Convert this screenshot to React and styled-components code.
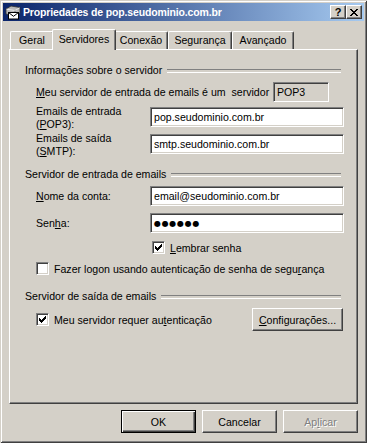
import React from 'react';
import styled, { createGlobalStyle, css } from 'styled-components';

const FACE = '#D4D0C8';
const FONT = '"Liberation Sans", Arial, sans-serif';
const FS = '10.6px';

const Global = createGlobalStyle`
  html, body { margin: 0; padding: 0; background: ${FACE}; }
  body { font-family: ${FONT}; font-size: ${FS}; color: #000; }
  * { box-sizing: border-box; }
`;

const Window = styled.div`
  width: 367px;
  height: 443px;
  background: ${FACE};
  padding: 3px;
  box-shadow: inset 1px 1px ${FACE}, inset -1px -1px #404040, inset 2px 2px #fff, inset -2px -2px #808080;
  display: flex;
  flex-direction: column;
`;

const TitleBar = styled.div`
  height: 18px;
  display: flex;
  align-items: center;
  gap: 2px;
  padding: 0 2px;
  background: linear-gradient(to right, #0a246a, #a6caf0);
  color: #fff;
  font-weight: bold;
  font-size: 10.5px;
  letter-spacing: -0.15px;
`;

const TitleText = styled.span`
  flex: 1;
  white-space: nowrap;
`;

const CaptionButtons = styled.div`
  display: flex;
  gap: 0;
`;

const CaptionButton = styled.div`
  width: 16px;
  height: 14px;
  background: ${FACE};
  border: 1px solid;
  border-color: #fff #404040 #404040 #fff;
  box-shadow: inset -1px -1px #808080;
  display: flex;
  align-items: center;
  justify-content: center;
  color: #000;
  font-weight: bold;
  font-size: 11px;
  letter-spacing: 0;
  line-height: 1;
  padding-top: 1px;
`;

const TabRow = styled.div`
  height: 20px;
  margin: 8px 0 0 6px;
  padding-left: 1px;
  display: flex;
  align-items: flex-end;
`;

const Tab = styled.div`
  width: ${(p) => p.$w}px;
  height: 18px;
  background: ${FACE};
  border-top: 1px solid #fff;
  border-left: 1px solid #fff;
  border-right: 1px solid #404040;
  box-shadow: inset -1px 0 #808080;
  border-radius: 2px 2px 0 0;
  display: flex;
  align-items: center;
  justify-content: center;
  position: relative;
  z-index: 1;
  white-space: nowrap;
  padding-bottom: 1px;
  ${(p) =>
    p.$active &&
    css`
      height: 21px;
      margin: 0 -2px -1px;
      z-index: 2;
      padding-bottom: 3px;
    `}
`;

const Panel = styled.div`
  width: 349px;
  height: 355px;
  margin-left: 6px;
  background: ${FACE};
  border: 1px solid;
  border-color: #fff #404040 #404040 #fff;
  box-shadow: inset -1px -1px #808080;
  padding: 14px 14px 0 15px;
  display: flex;
  flex-direction: column;
`;

const GroupHeading = styled.div`
  height: 13px;
  line-height: 13px;
  margin-top: ${(p) => p.$mt || 0}px;
  margin-right: 2px;
  display: flex;
  align-items: center;
  gap: 5px;
  white-space: nowrap;
  &::after {
    content: '';
    flex: 1;
    height: 2px;
    border-top: 1px solid #808080;
    border-bottom: 1px solid #fff;
  }
`;

const Row = styled.div`
  margin-top: ${(p) => p.$mt || 0}px;
  padding-left: ${(p) => (p.$indent ?? 11)}px;
  height: ${(p) => p.$h}px;
  display: flex;
  align-items: center;
  white-space: nowrap;
`;

const FieldRow = styled.div`
  margin-top: ${(p) => p.$mt || 0}px;
  padding-left: 11px;
  height: ${(p) => p.$h}px;
  display: grid;
  grid-template-columns: 114px 194px;
  align-items: ${(p) => (p.$top ? 'start' : 'center')};
  line-height: 13px;
`;

const InfoLabel = styled.span`
  flex: 0 0 237px;
  white-space: pre;
`;

const Field = styled.div`
  width: ${(p) => p.$w || 194}px;
  height: 20px;
  margin-top: ${(p) => p.$mt || 0}px;
  background: ${(p) => (p.$readOnly ? FACE : '#fff')};
  border: 1px solid;
  border-color: #808080 #fff #fff #808080;
  box-shadow: inset 1px 1px #404040, inset -1px -1px ${FACE};
  padding: 0 3px;
  display: flex;
  align-items: center;
  white-space: nowrap;
  overflow: hidden;
`;

const Dots = styled.span`
  font-family: "DejaVu Sans", sans-serif;
  font-size: 8px;
  letter-spacing: 0.7px;
`;

const Key = styled.span`
  text-decoration: underline;
  text-underline-offset: 1px;
`;

const Check = styled.span`
  width: 13px;
  height: 13px;
  flex: 0 0 13px;
  background: #fff;
  border: 1px solid;
  border-color: #808080 #fff #fff #808080;
  box-shadow: inset 1px 1px #404040, inset -1px -1px ${FACE};
  display: flex;
  align-items: center;
  justify-content: center;
  margin-right: 5px;
`;

const Button = styled.button`
  width: ${(p) => p.$w || 75}px;
  height: 23px;
  padding: 0;
  margin-left: ${(p) => (p.$auto ? 'auto' : '0')};
  font: inherit;
  font-size: ${FS};
  background: ${FACE};
  color: #000;
  border: 1px solid;
  border-color: #fff #404040 #404040 #fff;
  box-shadow: inset -1px -1px #808080;
  ${(p) =>
    p.$default &&
    css`
      border-color: #000;
      box-shadow: inset 1px 1px #fff, inset -1px -1px #404040, inset -2px -2px #808080;
    `}
  &:disabled {
    color: #808080;
    text-shadow: 1px 1px #fff;
  }
`;

const ButtonBar = styled.div`
  width: 349px;
  margin: 6px 0 0 6px;
  display: flex;
  justify-content: flex-end;
  gap: 6px;
`;

const CheckMark = () => (
  <svg width="7" height="7" viewBox="0 0 7 7" shapeRendering="crispEdges">
    <path
      d="M0 2h1v3H0zM1 3h1v3H1zM2 4h1v3H2zM3 3h1v3H3zM4 2h1v3H4zM5 1h1v3H5zM6 0h1v3H6z"
      fill="#000"
    />
  </svg>
);

const CheckBox = ({ checked }) => <Check>{checked && <CheckMark />}</Check>;

const AppIcon = () => (
  <svg width="16" height="16" viewBox="0 0 16 16">
    <path d="M1 5 L6 2 L15 3.5 L15 9 L10 12 L1 10 Z" fill="#b8b8b8" stroke="#303030" strokeWidth="0.8" />
    <path d="M1.5 5.2 L10 6.5 L14.6 3.8" fill="none" stroke="#f4f4f4" strokeWidth="0.8" />
    <path d="M10 6.5 V11.6" stroke="#606060" strokeWidth="0.8" />
    <rect x="3.5" y="8.5" width="10" height="6.5" fill="#fff" stroke="#000" strokeWidth="1" />
    <path d="M3.5 8.5 L8.5 12.3 L13.5 8.5" fill="none" stroke="#000" strokeWidth="1" />
  </svg>
);

const CloseGlyph = () => (
  <svg width="8" height="7" viewBox="0 0 8 7" shapeRendering="crispEdges">
    <path d="M0 0h2l2 2.4L6 0h2L5 3.5 8 7H6L4 4.6 2 7H0l3-3.5z" fill="#000" />
  </svg>
);

const tabs = [
  { label: 'Geral', w: 44 },
  { label: 'Servidores', w: 64, active: true },
  { label: 'Conexão', w: 54 },
  { label: 'Segurança', w: 64 },
  { label: 'Avançado', w: 62 },
];

export default function App() {
  return (
    <>
      <Global />
      <Window>
        <TitleBar>
          <AppIcon />
          <TitleText>Propriedades de pop.seudominio.com.br</TitleText>
          <CaptionButtons>
            <CaptionButton>?</CaptionButton>
            <CaptionButton>
              <CloseGlyph />
            </CaptionButton>
          </CaptionButtons>
        </TitleBar>

        <TabRow>
          {tabs.map((t) => (
            <Tab key={t.label} $w={t.w} $active={t.active}>
              {t.label}
            </Tab>
          ))}
        </TabRow>

        <Panel>
          <GroupHeading>Informações sobre o servidor</GroupHeading>
          <Row $mt={5} $h={20}>
            <InfoLabel>
              <Key>M</Key>eu servidor de entrada de emails é um  servidor
            </InfoLabel>
            <Field $readOnly $w={56}>POP3</Field>
          </Row>
          <FieldRow $mt={3} $h={26} $top>
            <span>
              Emails de entrada
              <br />(<Key>P</Key>OP3):
            </span>
            <Field $mt={2}>pop.seudominio.com.br</Field>
          </FieldRow>
          <FieldRow $mt={1} $h={26} $top>
            <span>
              Emails de saída
              <br />(<Key>S</Key>MTP):
            </span>
            <Field $mt={2}>smtp.seudominio.com.br</Field>
          </FieldRow>

          <GroupHeading $mt={10}>Servidor de entrada de emails</GroupHeading>
          <FieldRow $mt={5} $h={20}>
            <span>
              <Key>N</Key>ome da conta:
            </span>
            <Field>email@seudominio.com.br</Field>
          </FieldRow>
          <FieldRow $mt={7} $h={20}>
            <span>
              Sen<Key>h</Key>a:
            </span>
            <Field>
              <Dots>●●●●●●</Dots>
            </Field>
          </FieldRow>
          <Row $mt={8} $h={13} $indent={127}>
            <CheckBox checked />
            <span>
              <Key>L</Key>embrar senha
            </span>
          </Row>
          <Row $mt={8} $h={13}>
            <CheckBox />
            <span>
              Fazer logon usando autenticação de senha de segu<Key>r</Key>ança
            </span>
          </Row>

          <GroupHeading $mt={15}>Servidor de saída de emails</GroupHeading>
          <Row $mt={5} $h={23}>
            <CheckBox checked />
            <span>
              Meu servidor requer au<Key>t</Key>enticação
            </span>
            <Button $w={91} $auto>
              <Key>C</Key>onfigurações...
            </Button>
          </Row>
        </Panel>

        <ButtonBar>
          <Button $default>OK</Button>
          <Button>Cancelar</Button>
          <Button disabled>
            Ap<Key>l</Key>icar
          </Button>
        </ButtonBar>
      </Window>
    </>
  );
}
